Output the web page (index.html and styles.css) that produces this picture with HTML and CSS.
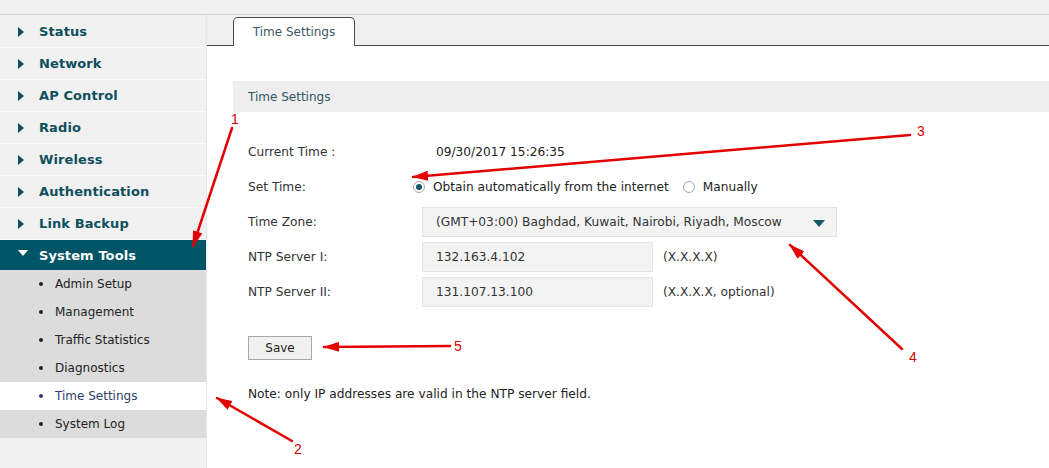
FILE: index.html
```html
<!DOCTYPE html>
<html>
<head>
<meta charset="utf-8">
<link rel="stylesheet" href="styles.css">
</head>
<body>
<div class="topbar"></div>
<div class="layout">
  <nav class="sidebar">
    <div class="menu-item"><span class="tri"></span>Status</div>
    <div class="menu-item"><span class="tri"></span>Network</div>
    <div class="menu-item"><span class="tri"></span>AP Control</div>
    <div class="menu-item"><span class="tri"></span>Radio</div>
    <div class="menu-item"><span class="tri"></span>Wireless</div>
    <div class="menu-item"><span class="tri"></span>Authentication</div>
    <div class="menu-item"><span class="tri"></span>Link Backup</div>
    <div class="menu-item open"><span class="tri down"></span>System Tools</div>
    <ul class="submenu">
      <li>Admin Setup</li>
      <li>Management</li>
      <li>Traffic Statistics</li>
      <li>Diagnostics</li>
      <li class="active">Time Settings</li>
      <li>System Log</li>
    </ul>
  </nav>
  <main class="main">
    <div class="tabbar">
      <div class="tab">Time Settings</div>
    </div>
    <section class="content">
      <div class="section-head">Time Settings</div>
      <div class="form">
        <div class="label">Current Time :</div>
        <div class="value text">09/30/2017 15:26:35</div>

        <div class="label">Set Time:</div>
        <div class="value radios">
          <span class="radio checked"></span><span class="rlabel">Obtain automatically from the internet</span>
          <span class="radio"></span><span class="rlabel">Manually</span>
        </div>

        <div class="label">Time Zone:</div>
        <div class="value"><div class="select">(GMT+03:00) Baghdad, Kuwait, Nairobi, Riyadh, Moscow<span class="caret"></span></div></div>

        <div class="label">NTP Server I:</div>
        <div class="value"><div class="input">132.163.4.102</div><span class="hint">(X.X.X.X)</span></div>

        <div class="label">NTP Server II:</div>
        <div class="value"><div class="input">131.107.13.100</div><span class="hint">(X.X.X.X, optional)</span></div>
      </div>
      <div class="btn">Save</div>
      <p class="note">Note: only IP addresses are valid in the NTP server field.</p>
    </section>
  </main>
</div>
<svg class="annot" width="1049" height="468" viewBox="0 0 1049 468">
  <defs>
    <marker id="ah" markerUnits="userSpaceOnUse" markerWidth="16" markerHeight="10" refX="15" refY="5" orient="auto">
      <path d="M0,0 L16,5 L0,10 Z" fill="#e50000"/>
    </marker>
  </defs>
  <g stroke="#e50000" stroke-width="2.5" fill="none" stroke-linecap="round">
    <line x1="232" y1="128" x2="193" y2="246" marker-end="url(#ah)"/>
    <line x1="292" y1="441" x2="217" y2="398" marker-end="url(#ah)"/>
    <line x1="910" y1="135" x2="413" y2="177" marker-end="url(#ah)"/>
    <line x1="902" y1="349" x2="790" y2="245" marker-end="url(#ah)"/>
    <line x1="450" y1="346" x2="324" y2="347" marker-end="url(#ah)"/>
  </g>
  <g class="num" fill="#d40000">
    <text x="231" y="124">1</text>
    <text x="294" y="454">2</text>
    <text x="917" y="136">3</text>
    <text x="909" y="362">4</text>
    <text x="454" y="351">5</text>
  </g>
</svg>
</body>
</html>
```
FILE: styles.css
```css
* { box-sizing: border-box; }
html, body { margin: 0; padding: 0; }
body {
  width: 1049px;
  height: 468px;
  overflow: hidden;
  position: relative;
  font-family: "DejaVu Sans", Verdana, sans-serif;
  font-size: 12px;
  color: #333;
  background: #fff;
}
.topbar {
  height: 15px;
  background: #f0f0f0;
  border-bottom: 1px solid #d2d2d2;
}
.layout {
  display: flex;
  height: 453px;
}
.sidebar {
  width: 207px;
  background: #f1f1f2;
  border-right: 1px solid #e6e6e6;
  padding-top: 1px;
}
.menu-item {
  height: 32px;
  display: flex;
  align-items: center;
  padding-left: 18px;
  font-size: 13px;
  font-weight: bold;
  color: #0e4f5c;
  border-bottom: 1px solid #fbfbfb;
  letter-spacing: 0.1px;
}
.menu-item .tri {
  width: 0;
  height: 0;
  border-top: 5px solid transparent;
  border-bottom: 5px solid transparent;
  border-left: 6px solid #0e4f5c;
  margin-right: 15px;
}
.menu-item.open {
  background: #005566;
  color: #fff;
  height: 30px;
  border-bottom: none;
}
.menu-item .tri.down {
  border-left: 5px solid transparent;
  border-right: 5px solid transparent;
  border-top: 6px solid #fff;
  border-bottom: none;
  margin-right: 11px;
  margin-top: -4px;
}
.submenu {
  list-style: none;
  margin: 0;
  padding: 0;
  background: #dcdcdd;
}
.submenu li {
  height: 28px;
  display: flex;
  align-items: center;
  padding-left: 55px;
  position: relative;
  color: #222;
  font-size: 12px;
}
.submenu li::before {
  content: "";
  position: absolute;
  left: 39px;
  top: 12px;
  width: 4px;
  height: 4px;
  border-radius: 50%;
  background: #222;
}
.submenu li.active {
  background: #fff;
  color: #2e3d6a;
}
.submenu li.active::before { background: #2e3d6a; }

.main {
  flex: 1;
  display: flex;
  flex-direction: column;
}
.tabbar {
  height: 31px;
  background: #f0f0f0;
  border-bottom: 1px solid #4a4a4a;
  padding-left: 26px;
  display: flex;
  align-items: flex-end;
}
.tab {
  width: 122px;
  height: 29px;
  margin-bottom: -1px;
  background: #fff;
  border: 1px solid #4a4a4a;
  border-bottom: none;
  border-radius: 5px 5px 0 0;
  display: flex;
  align-items: center;
  justify-content: center;
  color: #3d5866;
  font-size: 12px;
}
.content {
  padding: 35px 0 0 26px;
  flex: 1;
}
.section-head {
  height: 31px;
  background: #eeeeee;
  display: flex;
  align-items: center;
  padding-left: 15px;
  color: #2f5563;
  font-size: 12px;
}
.form {
  display: grid;
  grid-template-columns: 174px 1fr;
  grid-auto-rows: 30px;
  row-gap: 5px;
  margin-top: 25px;
  padding-left: 15px;
  font-size: 12.2px;
}
.label, .value {
  display: flex;
  align-items: center;
}
.label { color: #333; }
.value.text { padding-left: 14px; color: #222; }
.radio {
  width: 12px;
  height: 12px;
  border-radius: 50%;
  border: 1px solid #a8a8a8;
  background: #fff;
  margin-left: -9px;
  margin-right: 8px;
  position: relative;
}
.radio.checked::after {
  content: "";
  position: absolute;
  left: 2px;
  top: 2px;
  width: 6px;
  height: 6px;
  border-radius: 50%;
  background: #105868;
}
.rlabel { color: #222; }
.rlabel + .radio { margin-left: 14px; }
.select {
  width: 415px;
  height: 30px;
  background: #f3f3f3;
  border: 1px solid #e2e2e2;
  display: flex;
  align-items: center;
  padding-left: 13px;
  color: #333;
  position: relative;
}
.caret {
  position: absolute;
  right: 11px;
  top: 12px;
  width: 0;
  height: 0;
  border-left: 6px solid transparent;
  border-right: 6px solid transparent;
  border-top: 7px solid #115a66;
}
.input {
  width: 231px;
  height: 30px;
  background: #f3f3f3;
  border: 1px solid #e4e4e4;
  display: flex;
  align-items: center;
  padding-left: 13px;
  color: #333;
}
.hint { margin-left: 10px; color: #333; }
.btn {
  width: 64px;
  height: 24px;
  margin: 29px 0 0 15px;
  background: #f1f1f1;
  border: 1px solid #a9a9a9;
  display: flex;
  align-items: center;
  justify-content: center;
  color: #222;
}
.note {
  margin: 27px 0 0 15px;
  color: #222;
  font-size: 12.2px;
}
.annot {
  position: absolute;
  left: 0;
  top: 0;
  pointer-events: none;
}
.num text {
  font-family: "Liberation Sans", Arial, sans-serif;
  font-size: 14px;
}
```
